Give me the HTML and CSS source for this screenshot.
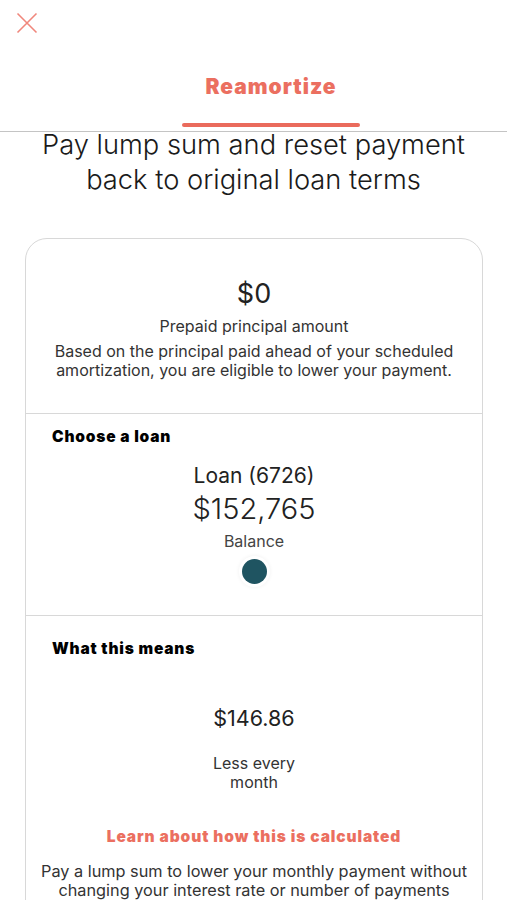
FILE: index.html
```html
<!DOCTYPE html>
<html lang="en">
<head>
    <meta charset="UTF-8">
    <meta name="viewport" content="width=device-width, initial-scale=1.0">
    <title>Reamortize</title>
    <link rel="stylesheet" href="styles.css">
</head>
<body>
    <!-- Top bar -->
    <div class="top-bar">
        <a href="#" class="close-btn" aria-label="Close">
            <svg width="22" height="22" viewBox="0 0 22 22">
                <path d="M1.5 1.5 L20.5 20.5 M20.5 1.5 L1.5 20.5" stroke="#f0877c" stroke-width="1.6" fill="none"/>
            </svg>
        </a>
    </div>

    <!-- Tabs -->
    <div class="tabs">
        <div class="tab active">Reamortize</div>
    </div>

    <h1 class="title">Pay lump sum and reset payment back to original loan terms</h1>

    <!-- Card -->
    <div class="card">
        <div class="card-section summary">
            <div class="amount">$0</div>
            <div class="amount-label">Prepaid principal amount</div>
            <p class="note">Based on the principal paid ahead of your scheduled amortization, you are eligible to lower your payment.</p>
        </div>

        <div class="card-section">
            <h3 class="section-title">Choose a loan</h3>
            <div class="loan">
                <div class="loan-name">Loan (6726)</div>
                <div class="loan-balance">$152,765</div>
                <div class="loan-label">Balance</div>
                <span class="dot"></span>
            </div>
        </div>

        <div class="card-section means">
            <h3 class="section-title">What this means</h3>
            <div class="result">
                <div class="result-amount">$146.86</div>
                <div class="result-label">Less every<br>month</div>
            </div>
            <a href="#" class="learn-link">Learn about how this is calculated</a>
            <p class="note bottom-note">Pay a lump sum to lower your monthly payment without changing your interest rate or number of payments</p>
        </div>
    </div>
</body>
</html>
```

FILE: styles.css
```css
body {
    font-family: Inter, "Noto Sans", sans-serif;
    margin: 0;
    padding: 0;
    background-color: #fff;
    color: #222;
    overflow: hidden;
}

/* Top bar */
.top-bar {
    height: 56px;
    padding: 12px 0 0 16px;
    box-sizing: border-box;
}
.close-btn {
    display: inline-block;
    width: 22px;
    height: 22px;
}

/* Tabs */
.tabs {
    display: flex;
    justify-content: center;
    border-bottom: 1px solid #c4c4c4;
    padding-left: 35px;
}
.tab {
    width: 178px;
    text-align: center;
    padding: 18px 0 32px;
    font-weight: 900;
    font-size: 21px;
    letter-spacing: 1px;
    color: #eb6f60;
    position: relative;
}
.tab.active::after {
    content: "";
    position: absolute;
    left: 0;
    right: 0;
    bottom: 4px;
    height: 4px;
    border-radius: 2px;
    background-color: #ea6b5c;
}

.title {
    margin: -5px 10px 0;
    text-align: center;
    font-size: 27.3px;
    font-weight: 300;
    line-height: 35px;
    color: #1a1a1a;
}

/* Card */
.card {
    margin: 41px 24px 0 25px;
    border: 1.5px solid #d8d8d8;
    border-radius: 22px;
}
.card-section {
    padding: 15px 26px 0;
    border-top: 1.5px solid #d8d8d8;
}
.card-section:first-child {
    border-top: none;
}
.summary {
    padding: 38px 14px 33px;
    text-align: center;
}
.amount {
    font-size: 27px;
    line-height: 34px;
}
.amount-label {
    margin-top: 5px;
    font-size: 16px;
    line-height: 20px;
    color: #333;
}
.note {
    margin: 6px 0 0;
    font-size: 16px;
    line-height: 19px;
    color: #333;
    text-align: center;
}

.section-title {
    margin: 0;
    font-size: 15.5px;
    font-weight: 900;
    letter-spacing: 0.8px;
    color: #000;
    line-height: 16px;
}

/* Loan */
.loan {
    display: flex;
    flex-direction: column;
    align-items: center;
    padding: 18px 0 31px;
}
.loan-name {
    font-size: 21px;
    line-height: 26px;
}
.loan-balance {
    margin-top: 2px;
    font-size: 29px;
    line-height: 36px;
    font-weight: 300;
}
.loan-label {
    margin-top: 2px;
    font-size: 16px;
    line-height: 24px;
    color: #444;
}
.dot {
    margin-top: 6px;
    width: 25px;
    height: 25px;
    border-radius: 50%;
    background-color: #1f5461;
    box-shadow: 0 0 0 3px #fff, 0 0 4px 3px rgba(0, 0, 0, 0.06);
}

/* Result */
.means {
    padding-top: 25px;
    padding-bottom: 40px;
}
.result {
    text-align: center;
    padding: 48px 0 0;
}
.result-amount {
    font-size: 21.5px;
    line-height: 26px;
}
.result-label {
    margin-top: 23px;
    font-size: 16px;
    line-height: 19px;
    color: #333;
}
.learn-link {
    display: block;
    margin-top: 35px;
    text-align: center;
    font-weight: 900;
    font-size: 15.5px;
    letter-spacing: 0.9px;
    color: #eb6f60;
    text-decoration: none;
}
.bottom-note {
    margin: 16px -16px 0;
    font-size: 16.3px;
}
```
